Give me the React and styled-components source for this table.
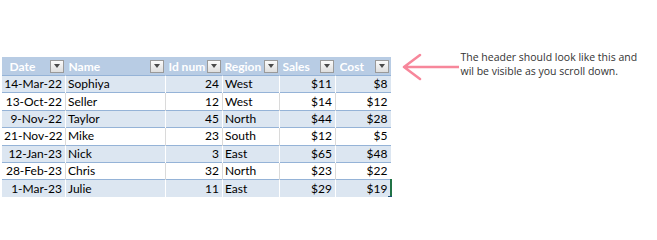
import React from 'react';
import styled, { createGlobalStyle } from 'styled-components';

const GlobalStyle = createGlobalStyle`
  html, body {
    margin: 0;
    padding: 0;
    background: #ffffff;
  }
`;

const rows = [
  { date: '14-Mar-22', name: 'Sophiya', id: 24, region: 'West', sales: '$11', cost: '$8' },
  { date: '13-Oct-22', name: 'Seller', id: 12, region: 'West', sales: '$14', cost: '$12' },
  { date: '9-Nov-22', name: 'Taylor', id: 45, region: 'North', sales: '$44', cost: '$28' },
  { date: '21-Nov-22', name: 'Mike', id: 23, region: 'South', sales: '$12', cost: '$5' },
  { date: '12-Jan-23', name: 'Nick', id: 3, region: 'East', sales: '$65', cost: '$48' },
  { date: '28-Feb-23', name: 'Chris', id: 32, region: 'North', sales: '$23', cost: '$22' },
  { date: '1-Mar-23', name: 'Julie', id: 11, region: 'East', sales: '$29', cost: '$19' },
];

const columns = [
  { key: 'date', label: 'Date', width: 64, align: 'right', indent: 8 },
  { key: 'name', label: 'Name', width: 100, align: 'left', indent: 3 },
  { key: 'id', label: 'Id num', width: 57, align: 'right', indent: 3 },
  { key: 'region', label: 'Region', width: 57, align: 'left', indent: 2 },
  { key: 'sales', label: 'Sales', width: 56, align: 'right', indent: 3 },
  { key: 'cost', label: 'Cost', width: 55, align: 'right', indent: 4 },
];

const Page = styled.div`
  display: flex;
  align-items: flex-start;
  padding: 50px 0 0 1px;
`;

const TableWrap = styled.div`
  margin-top: 7px;
`;

const Table = styled.table`
  width: 389px;
  border-collapse: collapse;
  table-layout: fixed;
  font-family: Lato, "Liberation Sans", sans-serif;
  font-size: 12px;
  color: #000000;
`;

const HeaderCell = styled.th`
  height: 18px;
  padding: 0;
  background: #b8cce4;
  font-weight: bold;
  color: #ffffff;
  text-align: left;
`;

const HeaderInner = styled.div`
  display: flex;
  align-items: center;
  padding: 0 2px 0 ${(p) => p.$indent}px;
`;

const HeaderLabel = styled.span`
  flex: 1;
  overflow: hidden;
  white-space: nowrap;
`;

const DropButton = styled.span`
  flex: none;
  width: 12px;
  height: 11px;
  border: 1px solid #9a9a9a;
  background: linear-gradient(#fbfbfb, #dedede);
  display: flex;
  align-items: center;
  justify-content: center;
  &::after {
    content: '';
    border-left: 3.5px solid transparent;
    border-right: 3.5px solid transparent;
    border-top: 4px solid #4a4a4a;
  }
`;

const Row = styled.tr`
  background: ${(p) => (p.$band ? '#dce6f1' : '#ffffff')};
  border-top: 1px solid #95b3d7;
`;

const Cell = styled.td`
  height: 16.4px;
  padding: 0 3px 0 2px;
  text-align: ${(p) => p.$align};
  white-space: nowrap;
  overflow: visible;
  line-height: 16px;
  border-left: 1px solid ${(p) => (p.$band || p.$first ? 'transparent' : '#dadada')};
  position: relative;
`;

const ResizeMark = styled.span`
  position: absolute;
  right: -1px;
  top: -1px;
  bottom: -2px;
  width: 2px;
  background: #217346;
  &::after {
    content: '';
    position: absolute;
    right: 0;
    bottom: 0;
    width: 4px;
    height: 3px;
    background: #1f4e79;
  }
`;

const Note = styled.div`
  display: flex;
  align-items: flex-start;
  margin-left: 10px;
`;

const Arrow = styled.svg`
  flex: none;
  margin-top: 3px;
`;

const NoteText = styled.p`
  margin: 0 0 0 2px;
  font-family: "Open Sans", "Noto Sans", sans-serif;
  font-size: 10.5px;
  line-height: 14px;
  color: #333333;
`;

const App = () => (
  <>
    <GlobalStyle />
    <Page>
      <TableWrap>
        <Table>
          <colgroup>
            {columns.map((c) => (
              <col key={c.key} style={{ width: c.width }} />
            ))}
          </colgroup>
          <thead>
            <tr>
              {columns.map((c) => (
                <HeaderCell key={c.key}>
                  <HeaderInner $indent={c.indent}>
                    <HeaderLabel>{c.label}</HeaderLabel>
                    <DropButton />
                  </HeaderInner>
                </HeaderCell>
              ))}
            </tr>
          </thead>
          <tbody>
            {rows.map((r, i) => (
              <Row key={r.date} $band={i % 2 === 0}>
                {columns.map((c, j) => (
                  <Cell key={c.key} $align={c.align} $band={i % 2 === 0} $first={j === 0}>
                    {r[c.key]}
                    {i === rows.length - 1 && c.key === 'cost' && <ResizeMark />}
                  </Cell>
                ))}
              </Row>
            ))}
          </tbody>
        </Table>
      </TableWrap>
      <Note>
        <Arrow width="58" height="28" viewBox="0 0 58 28">
          <path
            d="M58 14 H3 M19 2 L3 14 L19 26"
            fill="none"
            stroke="#f7879b"
            strokeWidth="2.5"
            strokeLinecap="round"
            strokeLinejoin="round"
          />
        </Arrow>
        <NoteText>
          The header should look like this and
          <br />
          wil be visible as you scroll down.
        </NoteText>
      </Note>
    </Page>
  </>
);

export default App;
